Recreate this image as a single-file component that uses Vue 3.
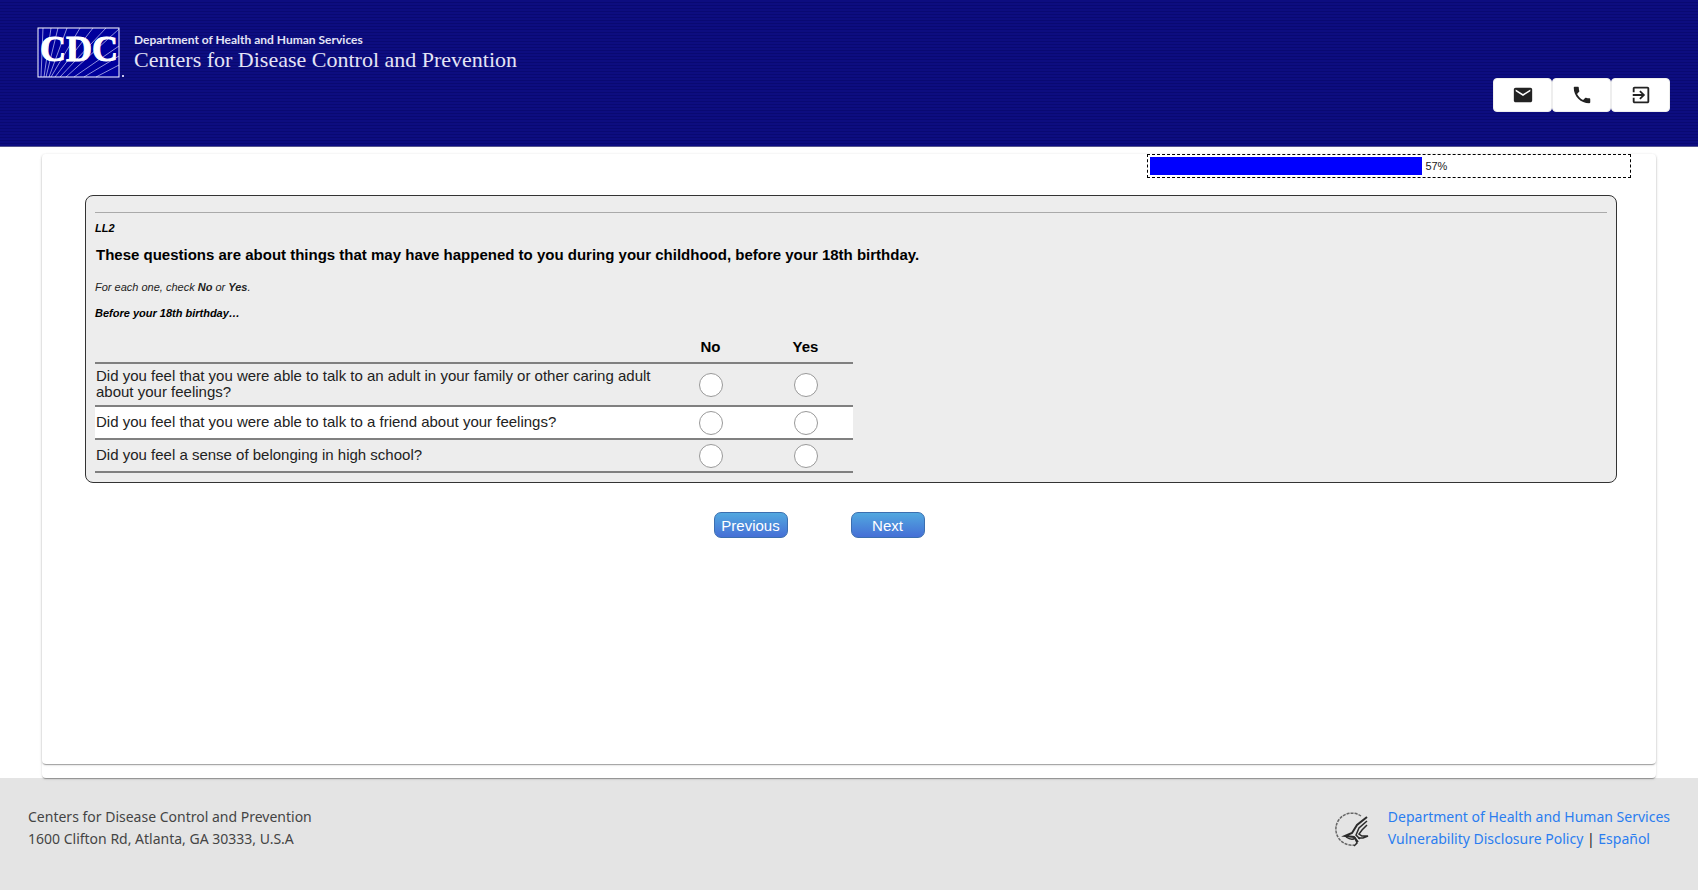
<script setup>
import { reactive } from 'vue'

const progress = 57

const questions = [
    { id: 'll2a', text: 'Did you feel that you were able to talk to an adult in your family or other caring adult about your feelings?' },
    { id: 'll2b', text: 'Did you feel that you were able to talk to a friend about your feelings?' },
    { id: 'll2c', text: 'Did you feel a sense of belonging in high school?' }
]
const choices = ['No', 'Yes']

const answers = reactive({
    ll2a: "",
    ll2b: "",
    ll2c: ""
})

const submitForm = () => {
    console.log(answers)
}
</script>

<template>
    <div class="page">
        <header>
            <div class="brand">
                <svg class="cdc" width="88" height="52" viewBox="0 0 88 52" role="img" aria-label="CDC">
                    <rect x="1" y="1" width="82" height="50" fill="#00009c" />
                    <g stroke="#8f8fdc" stroke-width="1" fill="none">
                        <path d="M4 50L6 1M7 50L14 1M9 50L21 1M12 50L30 1M14 50L43 1M18 50L56 1M23 50L69 1M29 50L82 2M37 50L82 19M47 50L82 29M59 50L82 38" />
                    </g>
                    <rect x="1" y="1" width="81" height="49" fill="none" stroke="#fff" stroke-width="1" />
                    <text x="3" y="34" class="cdc-text">CDC</text>
                    <path d="M85 49h2" stroke="#c4c4ee" stroke-width="2" />
                </svg>
                <div class="brand-text">
                    <span class="department">Department of Health and Human Services</span>
                    <span class="centers">Centers for Disease Control and Prevention</span>
                </div>
            </div>
            <nav>
                <button type="button" aria-label="Email">
                    <svg width="22" height="22" viewBox="0 0 24 24"><path d="M20 4H4c-1.100 0-2 .9-2 2v12c0 1.100.9 2 2 2h16c1.100 0 2-.9 2-2V6c0-1.100-.9-2-2-2zm0 4l-8 5-8-5V6l8 5 8-5v2z" /></svg>
                </button>
                <button type="button" aria-label="Phone">
                    <svg width="22" height="22" viewBox="0 0 24 24"><path d="M6.620 10.790c1.440 2.830 3.760 5.140 6.590 6.590l2.200-2.200c.27-.27.67-.36 1.020-.24 1.120.37 2.330.57 3.570.57.55 0 1 .45 1 1V20c0 .55-.45 1-1 1-9.390 0-17-7.610-17-17 0-.55.45-1 1-1h3.500c.55 0 1 .45 1 1 0 1.250.2 2.450.57 3.570.11.35.03.74-.25 1.020l-2.200 2.200z" /></svg>
                </button>
                <button type="button" aria-label="Exit">
                    <svg width="22" height="22" viewBox="0 0 24 24"><path d="M10.090 15.590L11.500 17l5-5-5-5-1.410 1.410L12.670 11H3v2h9.670l-2.580 2.590zM19 3H5c-1.110 0-2 .9-2 2v4h2V5h14v14H5v-4H3v4c0 1.100.89 2 2 2h14c1.100 0 2-.9 2-2V5c0-1.100-.9-2-2-2z" /></svg>
                </button>
            </nav>
        </header>

        <main>
            <div class="outer-card">
                <form class="card" @submit.prevent="submitForm">
                    <!-- Progress bar -->
                    <div class="progress" role="progressbar" :aria-valuenow="progress" aria-valuemin="0" aria-valuemax="100">
                        <div class="bar" :style="{ width: progress + '%' }"></div>
                        <span>{{ progress }}%</span>
                    </div>

                    <!-- Questions -->
                    <section class="question">
                        <hr>
                        <p class="code">LL2</p>
                        <h1>These questions are about things that may have happened to you during your childhood, before your 18th birthday.</h1>
                        <p class="hint">For each one, check <b>No</b> or <b>Yes</b>.</p>
                        <p class="lead">Before your 18th birthday…</p>
                        <table>
                            <thead>
                                <tr>
                                    <td></td>
                                    <th v-for="choice in choices" :key="choice" scope="col">{{ choice }}</th>
                                </tr>
                            </thead>
                            <tbody>
                                <tr v-for="question in questions" :key="question.id">
                                    <th scope="row" :id="question.id">{{ question.text }}</th>
                                    <td v-for="choice in choices" :key="choice">
                                        <label>
                                            <input type="radio" :name="question.id" :value="choice"
                                                :aria-label="choice" :aria-describedby="question.id" v-model="answers[question.id]">
                                        </label>
                                    </td>
                                </tr>
                            </tbody>
                        </table>
                    </section>

                    <div class="actions">
                        <button type="button">Previous</button>
                        <button type="submit">Next</button>
                    </div>
                </form>
            </div>
        </main>

        <footer>
            <address>
                Centers for Disease Control and Prevention<br>
                1600 Clifton Rd, Atlanta, GA 30333, U.S.A
            </address>
            <div class="footer-right">
                <svg width="36" height="36" viewBox="0 0 36 36" fill="none" stroke="#2b2b2b" aria-hidden="true">
                    <path d="M27 5A16 16 0 1 0 20 34" stroke="#666" stroke-width="1.500" stroke-dasharray="3 1" />
                    <path d="M33 6L23 14L18 22L11 25L20 26L24 31" stroke-width="2" />
                    <path d="M33 10L25 17L22 24L26 28" stroke-width="1.500" />
                    <path d="M33 14L28 19L25 23L28 25L34 25L29 27L24 27" stroke-width="1.500" />
                    <path d="M12 26Q18 30 21 27L23 32L20 35" stroke-width="1.500" />
                </svg>
                <div>
                    <a href="#">Department of Health and Human Services</a><br>
                    <a href="#">Vulnerability Disclosure Policy</a> | <a href="#">Español</a>
                </div>
            </div>
        </footer>
    </div>
</template>

<style>
body {
    margin: 0;
    background-color: white;
}
</style>

<style scoped>
.page {
    display: flex;
    flex-direction: column;
    min-height: 100vh;
    font-family: "Liberation Sans", Arial, sans-serif;
    color: #222;
}

header {
    display: flex;
    justify-content: space-between;
    box-sizing: border-box;
    height: 147px;
    padding: 27px 28px 0 37px;
    border-bottom: 1px solid #55558f;
    background: repeating-linear-gradient(#0d0d80 0, #0d0d80 2px, #090972 2px, #090972 3px);
}

.brand {
    display: flex;
    align-items: flex-start;
    gap: 9px;
    color: white;
}

.cdc-text {
    font: bold 36px "Liberation Serif", serif;
    fill: white;
    stroke: white;
    stroke-width: 1px;
}

.brand-text {
    display: flex;
    flex-direction: column;
    padding-top: 5px;
}

.department {
    font: bold 12px/16px Lato, sans-serif;
    color: #e4e4f6;
}

.centers {
    font: 22px/24px "Liberation Serif", serif;
    color: #e4e4f6;
}

nav {
    display: flex;
    padding-top: 51px;
}

nav button {
    display: flex;
    align-items: center;
    justify-content: center;
    width: 59px;
    height: 34px;
    padding: 0;
    border: 1px solid #eee;
    border-radius: 4px;
    background-color: white;
    cursor: pointer;
}

nav svg {
    fill: #222;
}

main {
    display: flex;
    flex: 1;
    padding: 7px 42px 0;
}

.outer-card,
.card {
    flex: 1;
    border-radius: 4px;
    background-color: white;
    box-shadow: 0 2px 1px -1px rgba(0, 0, 0, 0.2), 0 1px 1px rgba(0, 0, 0, 0.14), 0 1px 3px rgba(0, 0, 0, 0.12);
}

.outer-card {
    display: flex;
    position: relative;
    padding-bottom: 14px;
}

.progress {
    display: flex;
    align-items: center;
    box-sizing: border-box;
    width: 30%;
    min-width: 200px;
    height: 24px;
    margin: 0 25px 0 auto;
    padding: 2px;
    border: 1px dashed black;
    font-size: 11px;
}

.bar {
    height: 18px;
    margin-right: 3px;
    background-color: blue;
}

.question {
    margin: 17px 39px 0 43px;
    padding: 16px 9px 9px;
    border: 1px solid #333;
    border-radius: 8px;
    background-color: #ededed;
}

hr {
    height: 1px;
    margin: 0;
    border: 0;
    background-color: #aaa;
}

.question p,
.question h1 {
    margin: 0;
}

.code,
.hint,
.lead {
    font-size: 11px;
    line-height: 16px;
    font-style: italic;
}

.code,
.lead {
    font-weight: bold;
    color: black;
}

.question .code {
    padding-top: 7px;
}

.question h1 {
    padding: 9px 1px 14px;
    font-size: 15px;
    line-height: 20px;
    color: black;
}

.question .lead {
    padding-top: 10px;
}

table {
    width: calc(50% + 2px);
    margin-top: 10px;
    border-collapse: collapse;
    font-size: 15px;
    line-height: 16px;
}

tr {
    border-bottom: 2px solid #808080;
}

thead tr {
    height: 32px;
}

tbody tr {
    height: 33px;
}

tbody tr:nth-child(even) {
    background-color: white;
}

th,
td {
    padding: 0;
    text-align: center;
}

thead th {
    width: 95px;
    color: black;
}

tbody th {
    padding: 4px 1px 5px;
    font-weight: normal;
    text-align: left;
}

label {
    display: flex;
    justify-content: center;
}

input[type="radio"] {
    width: 24px;
    height: 24px;
    margin: 0;
    border: 1px solid #999;
    border-radius: 50%;
    background-color: white;
    appearance: none;
    cursor: pointer;
}

input[type="radio"]:checked {
    border: 7px solid #4573d5;
}

.actions {
    display: flex;
    justify-content: center;
    gap: 63px;
    margin: 29px 60px 0 0;
}

.actions button {
    width: 74px;
    height: 26px;
    padding: 0;
    border: 1px solid #3b6fb0;
    border-radius: 7px;
    background: linear-gradient(#52a8df, #456fd6);
    color: white;
    font: 15px "Liberation Sans", Arial, sans-serif;
    cursor: pointer;
}

footer {
    display: flex;
    justify-content: space-between;
    box-sizing: border-box;
    min-height: 112px;
    padding: 28px 28px;
    background-color: #e4e4e4;
    font-family: "Noto Sans", sans-serif;
    font-size: 14px;
    line-height: 22px;
}

address {
    font-style: normal;
    color: #444;
}

.footer-right {
    display: flex;
    gap: 18px;
}

.footer-right svg {
    margin-top: 5px;
}

a {
    color: #2a7df0;
    text-decoration: none;
}
</style>
